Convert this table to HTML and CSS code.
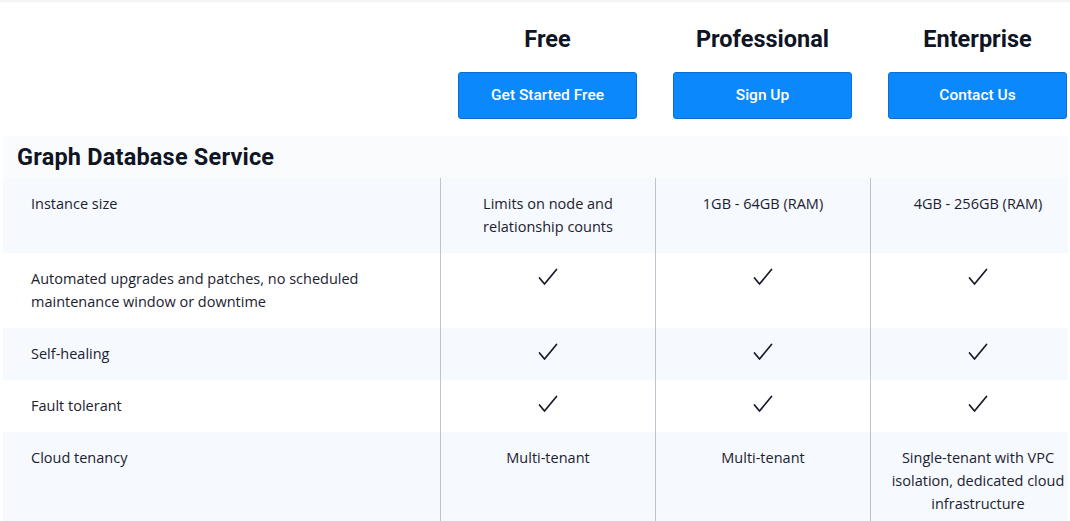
FILE: index.html
```html
<!DOCTYPE html>
<html lang="en">
<head>
<meta charset="utf-8">
<title>Pricing comparison</title>
<link rel="stylesheet" href="styles.css">
</head>
<body>
<div class="page">
  <div class="topline"></div>
  <div class="table">
    <div class="head-row">
      <div class="head-cell head-empty"></div>
      <div class="head-cell">
        <h2 class="plan-name">Free</h2>
        <a class="btn" href="#">Get Started Free</a>
      </div>
      <div class="head-cell">
        <h2 class="plan-name">Professional</h2>
        <a class="btn" href="#">Sign Up</a>
      </div>
      <div class="head-cell">
        <h2 class="plan-name">Enterprise</h2>
        <a class="btn" href="#">Contact Us</a>
      </div>
    </div>

    <div class="section-band">
      <h3 class="section-title">Graph Database Service</h3>
    </div>

    <div class="row shaded">
      <div class="label">Instance size</div>
      <div class="val">Limits on node and relationship counts</div>
      <div class="val">1GB - 64GB (RAM)</div>
      <div class="val">4GB - 256GB (RAM)</div>
    </div>
    <div class="row">
      <div class="label">Automated upgrades and patches, no scheduled maintenance window or downtime</div>
      <div class="val"><svg class="check" viewBox="0 0 20 18" width="20" height="18"><polyline points="1.5,10 6.5,16 18.5,1.5"/></svg></div>
      <div class="val"><svg class="check" viewBox="0 0 20 18" width="20" height="18"><polyline points="1.5,10 6.5,16 18.5,1.5"/></svg></div>
      <div class="val"><svg class="check" viewBox="0 0 20 18" width="20" height="18"><polyline points="1.5,10 6.5,16 18.5,1.5"/></svg></div>
    </div>
    <div class="row shaded">
      <div class="label">Self-healing</div>
      <div class="val"><svg class="check" viewBox="0 0 20 18" width="20" height="18"><polyline points="1.5,10 6.5,16 18.5,1.5"/></svg></div>
      <div class="val"><svg class="check" viewBox="0 0 20 18" width="20" height="18"><polyline points="1.5,10 6.5,16 18.5,1.5"/></svg></div>
      <div class="val"><svg class="check" viewBox="0 0 20 18" width="20" height="18"><polyline points="1.5,10 6.5,16 18.5,1.5"/></svg></div>
    </div>
    <div class="row">
      <div class="label">Fault tolerant</div>
      <div class="val"><svg class="check" viewBox="0 0 20 18" width="20" height="18"><polyline points="1.5,10 6.5,16 18.5,1.5"/></svg></div>
      <div class="val"><svg class="check" viewBox="0 0 20 18" width="20" height="18"><polyline points="1.5,10 6.5,16 18.5,1.5"/></svg></div>
      <div class="val"><svg class="check" viewBox="0 0 20 18" width="20" height="18"><polyline points="1.5,10 6.5,16 18.5,1.5"/></svg></div>
    </div>
    <div class="row shaded">
      <div class="label">Cloud tenancy</div>
      <div class="val">Multi-tenant</div>
      <div class="val">Multi-tenant</div>
      <div class="val">Single-tenant with VPC isolation, dedicated cloud infrastructure</div>
    </div>
  </div>
</div>
</body>
</html>
```

FILE: styles.css
```css
* { box-sizing: border-box; }

html, body {
  margin: 0;
  padding: 0;
  background: #ffffff;
  overflow: hidden;
}

body {
  font-family: "Open Sans", "Noto Sans", sans-serif;
  color: #1c2130;
  font-size: 14.5px;
  line-height: 23px;
}

.page {
  width: 1070px;
  overflow: hidden;
}

.topline {
  height: 2px;
  background: #f3f4f5;
}

.table {
  margin-left: 3px;
  width: 1065px;
  overflow: hidden;
}

.head-row,
.row {
  display: grid;
  grid-template-columns: 437px 215px 215px 215px;
  width: 1082px;
}

.head-cell {
  display: flex;
  flex-direction: column;
  align-items: center;
  padding: 22px 0 17px;
}

.plan-name {
  margin: 0;
  font-family: "Roboto", "Liberation Sans", sans-serif;
  font-weight: 700;
  font-size: 23.5px;
  line-height: 30px;
  color: #0f1524;
  letter-spacing: 0;
}

.btn {
  margin-top: 18px;
  width: 179px;
  height: 47px;
  display: flex;
  align-items: center;
  justify-content: center;
  background: #0b88fc;
  border: 1px solid #0a6fd1;
  border-radius: 3px;
  color: #ffffff;
  text-decoration: none;
  font-family: "Roboto", "Liberation Sans", sans-serif;
  font-weight: 500;
  font-size: 15.5px;
}

.section-band {
  background: #fafbfc;
  height: 42px;
  display: flex;
  align-items: center;
  padding-left: 14px;
}

.section-title {
  margin: 0;
  font-family: "Roboto", "Liberation Sans", sans-serif;
  font-weight: 700;
  font-size: 23.5px;
  color: #0f1524;
  letter-spacing: 0.2px;
}

.row.shaded {
  background: #f6f9fd;
}

.label {
  padding: 14px 60px 15px 28px;
}

.val {
  border-left: 1px solid #b9c6d1;
  text-align: center;
  padding: 14px 20px 15px;
}

.check {
  display: block;
  margin: 1px auto 0;
  fill: none;
  stroke: #151a28;
  stroke-width: 1.7;
  stroke-linecap: round;
  stroke-linejoin: round;
}
```
